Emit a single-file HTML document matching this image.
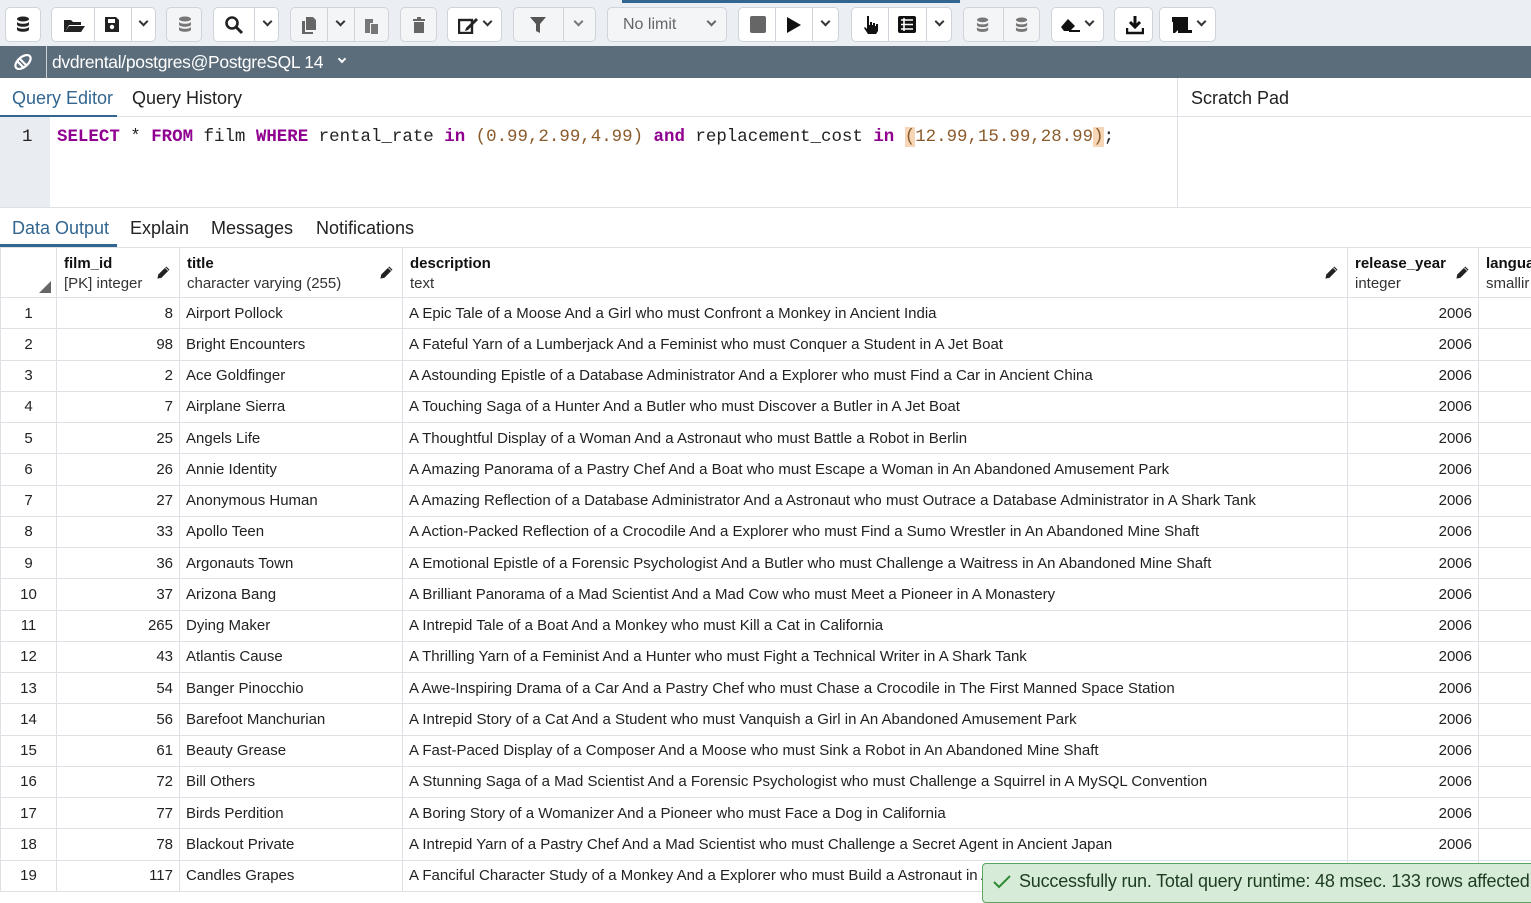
<!DOCTYPE html>
<html><head><meta charset="utf-8"><style>
*{box-sizing:border-box;margin:0;padding:0}
body{width:1531px;height:888px;overflow:hidden;background:#fff;font-family:"Liberation Sans",Arial,sans-serif;color:#222;position:relative}
.abs{position:absolute}
#tb{left:0;top:0;width:1531px;height:46px;background:#ebeef3}
.btn{position:absolute;top:7px;height:35px;border:1px solid #cfd4da;border-radius:5px;background:#fff}
.dv{position:absolute;top:0;bottom:0;width:1px;background:#cfd4da}
.ic{position:absolute;top:8px;font-size:17px;color:#222;line-height:18px}
.chev{position:absolute;top:10px;width:7px;height:7px;border-right:2px solid #333;border-bottom:2px solid #333;transform:rotate(45deg)}
#conn{left:0;top:46px;width:1531px;height:32px;background:#5b6c7b;color:#fff;font-size:17.5px}
.tab{position:absolute;font-size:18px;color:#222}
.code{font-family:"Liberation Mono",monospace;font-size:17.45px;white-space:pre;color:#222}
.kw{color:#900090;font-weight:bold}
.num{color:#8a5a2a}
table{border-collapse:collapse;position:absolute;left:0;top:247px;table-layout:fixed;width:1538px;font-size:15px}
td{border:1px solid #dde0e5;height:31.25px;padding:0 6px;white-space:nowrap;overflow:hidden;color:#222}
th{border:1px solid #dde0e5;height:50px;text-align:left;font-weight:normal;padding:0 7px;vertical-align:top;position:relative}
th b{display:block;margin-top:7px;font-size:15px;color:#111}
th span{display:block;font-size:15px;color:#333;margin-top:3px}
.pen{position:absolute;right:8px;top:17px}
td.r{text-align:right}
td.c{text-align:center;padding:0}
</style></head><body>
<svg width="0" height="0" style="position:absolute"><defs>
<symbol id="db" viewBox="0 0 16 18"><ellipse cx="7" cy="3" rx="6" ry="2.5"/><path d="M1 5.5c0 3 12 3 12 0v3c0 3-12 3-12 0z M1 10.5c0 3 12 3 12 0v3c0 3-12 3-12 0z"/></symbol>
<symbol id="pen" viewBox="0 0 16 16"><path d="M11 1l4 4-9 9-5 1 1-5z M10 3l3 3" fill="#222" stroke="#fff" stroke-width="0.8"/></symbol>
</defs></svg>
<div id="tb" class="abs"></div>
<div class="abs" style="left:622px;top:0;width:338px;height:3px;background:#326690"></div>
<div class="btn" style="left:5px;width:36px"><svg class="abs" style="left:10px;top:8px" width="16" height="18" fill="#222"><use href="#db"/></svg></div>
<div class="btn" style="left:51px;width:105px"><div class="dv" style="left:42px"></div><div class="dv" style="left:79px"></div>
<svg class="abs" style="left:11px;top:9px" width="22" height="16"><path d="M1 3h7l2 2h8v3H6L2 15H1z M6 9h16l-4 6H2z" fill="#222"/></svg>
<svg class="abs" style="left:52px;top:8px" width="16" height="17"><path d="M1 1h11l3 3v12H1z" fill="#222"/><rect x="4" y="3" width="7" height="4" fill="#fff"/><circle cx="8" cy="11" r="2.2" fill="#fff"/></svg>
<div class="chev" style="left:88px"></div></div>
<div class="btn" style="left:166px;width:36px;background:#f4f5f7"><svg class="abs" style="left:11px;top:8px" width="16" height="18" fill="#777"><use href="#db"/></svg></div>
<div class="btn" style="left:213px;width:66px"><div class="dv" style="left:40px"></div>
<svg class="abs" style="left:10px;top:7px" width="20" height="20"><circle cx="8" cy="8" r="5.5" stroke="#222" stroke-width="2.6" fill="none"/><path d="M12 12l6 6" stroke="#222" stroke-width="3"/></svg>
<div class="chev" style="left:50px"></div></div>
<div class="btn" style="left:290px;width:99px;background:#f4f5f7"><div class="dv" style="left:36px"></div><div class="dv" style="left:63px"></div>
<svg class="abs" style="left:10px;top:8px" width="16" height="18"><path d="M5 1h7l3 3v10H5z M1 5h3v11h8v2H1z" fill="#666"/></svg>
<div class="chev" style="left:46px"></div>
<svg class="abs" style="left:72px;top:8px" width="16" height="18"><path d="M2 3h8v4H7v10H2z M8 8h7v10H8z" fill="#777"/></svg></div>
<div class="btn" style="left:400px;width:37px;background:#f4f5f7"><svg class="abs" style="left:11px;top:8px" width="14" height="18"><path d="M1 3h12v2H1z M5 1h4v2H5z M2 6h10v11H2z" fill="#666"/></svg></div>
<div class="btn" style="left:447px;width:55px"><svg class="abs" style="left:10px;top:8px" width="22" height="18"><rect x="1" y="4" width="13" height="13" fill="none" stroke="#222" stroke-width="2.4"/><path d="M8 12l10-10 2 2-10 10-3 1z" fill="#222"/></svg><div class="chev" style="left:36px"></div></div>
<div class="btn" style="left:513px;width:83px;background:#f4f5f7"><div class="dv" style="left:49px"></div>
<svg class="abs" style="left:15px;top:8px" width="18" height="18"><path d="M1 1h16l-6 7v9l-4-2V8z" fill="#555"/></svg><div class="chev" style="left:61px;border-color:#777"></div></div>
<div class="btn" style="left:607px;width:120px;background:#f4f5f7"><span class="abs" style="left:15px;top:8px;font-size:16px;color:#666">No limit</span><div class="chev" style="left:100px;border-color:#666"></div></div>
<div class="btn" style="left:738px;width:101px"><div class="dv" style="left:36px"></div><div class="dv" style="left:73px"></div>
<div class="abs" style="left:11px;top:8px;width:16px;height:17px;background:#666;border-radius:2px"></div>
<svg class="abs" style="left:47px;top:8px" width="16" height="18"><path d="M1 1l14 8-14 8z" fill="#111"/></svg>
<div class="chev" style="left:83px"></div></div>
<div class="btn" style="left:851px;width:101px"><div class="dv" style="left:36px"></div><div class="dv" style="left:74px"></div>
<svg class="abs" style="left:10px;top:7px" width="17" height="20"><path d="M5 1h2v9h1V7h2v3h1V8h2v3h1v-2h2v7l-2 3H6l-4-6 1-1 2 2z" fill="#111"/></svg>
<svg class="abs" style="left:46px;top:8px" width="18" height="17"><rect x="0" y="0" width="18" height="17" rx="2" fill="#111"/><path d="M3 4h12M3 8.5h12M3 13h12M6 2v13" stroke="#fff" stroke-width="1.6"/></svg>
<div class="chev" style="left:84px"></div></div>
<div class="btn" style="left:963px;width:77px;background:#f4f5f7"><div class="dv" style="left:39px"></div>
<svg class="abs" style="left:12px;top:9px" width="15" height="17" fill="#777"><use href="#db"/></svg><svg class="abs" style="left:51px;top:9px" width="15" height="17" fill="#777"><use href="#db"/></svg></div>
<div class="btn" style="left:1051px;width:53px"><svg class="abs" style="left:9px;top:10px" width="20" height="14"><path d="M7 1l7 7-5 5H3L0 9z" fill="#111"/><path d="M8 13h11" stroke="#111" stroke-width="2"/></svg><div class="chev" style="left:34px"></div></div>
<div class="btn" style="left:1114px;width:39px"><svg class="abs" style="left:11px;top:7px" width="18" height="20"><path d="M9 1v10M4 7l5 5 5-5" stroke="#111" stroke-width="3" fill="none"/><path d="M1 13v5h16v-5" stroke="#111" stroke-width="2.5" fill="none"/></svg></div>
<div class="btn" style="left:1159px;width:57px"><svg class="abs" style="left:10px;top:8px" width="24" height="18"><path d="M3 1h15v13H8l-3 3H3z M2 1h3v5H2z" fill="#111"/><path d="M8 17h14v-3H8z" fill="#111"/></svg><div class="chev" style="left:38px"></div></div>

<div id="conn" class="abs">
<svg class="abs" style="left:11px;top:6px" width="24" height="20"><g stroke="#fff" stroke-width="2.2" fill="none"><ellipse cx="12" cy="10" rx="9" ry="5" transform="rotate(-40 12 10)"/><path d="M8 6l8 8M6 9l6 6"/></g></svg>
<div class="abs" style="left:46px;top:0;width:1px;height:32px;background:#c9d0d6"></div>
<span class="abs" style="left:52px;top:6px;letter-spacing:-0.3px">dvdrental/postgres@PostgreSQL 14</span>
<div class="chev" style="left:339px;top:10px;width:6px;height:6px;border-color:#fff"></div>
</div>

<div class="tab" style="left:12px;top:88px;color:#326690">Query Editor</div>
<div class="tab" style="left:132px;top:88px">Query History</div>
<div class="abs" style="left:0;top:116px;width:1177px;height:1px;background:#dde0e5"></div>
<div class="abs" style="left:0;top:115px;width:117px;height:2px;background:#326690"></div>
<div class="abs" style="left:1177px;top:78px;width:1px;height:129px;background:#dde0e5"></div>
<div class="tab" style="left:1191px;top:88px">Scratch Pad</div>
<div class="abs" style="left:1177px;top:116px;width:354px;height:1px;background:#dde0e5"></div>

<div class="abs" style="left:0;top:117px;width:50px;height:90px;background:#e9ecf0"></div>
<div class="abs code" style="left:22px;top:127px">1</div>
<div class="abs code" style="left:57px;top:127px"><span class="kw">SELECT</span> * <span class="kw">FROM</span> film <span class="kw">WHERE</span> rental_rate <span class="kw">in</span> <span class="num">(0.99,2.99,4.99)</span> <span class="kw">and</span> replacement_cost <span class="kw">in</span> <span class="num"><span style="background:#f6d6b6">(</span>12.99,15.99,28.99<span style="background:#f6d6b6">)</span></span>;</div>
<div class="abs" style="left:0;top:207px;width:1531px;height:1px;background:#dde0e5"></div>

<div class="tab" style="left:12px;top:218px;color:#326690">Data Output</div>
<div class="tab" style="left:130px;top:218px">Explain</div>
<div class="tab" style="left:211px;top:218px">Messages</div>
<div class="tab" style="left:316px;top:218px">Notifications</div>
<div class="abs" style="left:0;top:244px;width:117px;height:3px;background:#326690"></div>

<table>
<colgroup><col style="width:56px"><col style="width:123px"><col style="width:223px"><col style="width:945px"><col style="width:131px"><col style="width:60px"></colgroup>
<tr><th><div class="abs" style="left:38px;top:33px;width:0;height:0;border-left:12px solid transparent;border-bottom:12px solid #666"></div></th>
<th><b>film_id</b><span>[PK] integer</span><svg class="pen" width="15" height="15"><use href="#pen"/></svg></th>
<th><b>title</b><span>character varying (255)</span><svg class="pen" width="15" height="15"><use href="#pen"/></svg></th>
<th><b>description</b><span>text</span><svg class="pen" width="15" height="15"><use href="#pen"/></svg></th>
<th><b>release_year</b><span>integer</span><svg class="pen" width="15" height="15"><use href="#pen"/></svg></th>
<th><b>langua</b><span>smallir</span></th></tr>
<tr><td class="c">1</td><td class="r">8</td><td>Airport Pollock</td><td>A Epic Tale of a Moose And a Girl who must Confront a Monkey in Ancient India</td><td class="r">2006</td><td></td></tr>
<tr><td class="c">2</td><td class="r">98</td><td>Bright Encounters</td><td>A Fateful Yarn of a Lumberjack And a Feminist who must Conquer a Student in A Jet Boat</td><td class="r">2006</td><td></td></tr>
<tr><td class="c">3</td><td class="r">2</td><td>Ace Goldfinger</td><td>A Astounding Epistle of a Database Administrator And a Explorer who must Find a Car in Ancient China</td><td class="r">2006</td><td></td></tr>
<tr><td class="c">4</td><td class="r">7</td><td>Airplane Sierra</td><td>A Touching Saga of a Hunter And a Butler who must Discover a Butler in A Jet Boat</td><td class="r">2006</td><td></td></tr>
<tr><td class="c">5</td><td class="r">25</td><td>Angels Life</td><td>A Thoughtful Display of a Woman And a Astronaut who must Battle a Robot in Berlin</td><td class="r">2006</td><td></td></tr>
<tr><td class="c">6</td><td class="r">26</td><td>Annie Identity</td><td>A Amazing Panorama of a Pastry Chef And a Boat who must Escape a Woman in An Abandoned Amusement Park</td><td class="r">2006</td><td></td></tr>
<tr><td class="c">7</td><td class="r">27</td><td>Anonymous Human</td><td>A Amazing Reflection of a Database Administrator And a Astronaut who must Outrace a Database Administrator in A Shark Tank</td><td class="r">2006</td><td></td></tr>
<tr><td class="c">8</td><td class="r">33</td><td>Apollo Teen</td><td>A Action-Packed Reflection of a Crocodile And a Explorer who must Find a Sumo Wrestler in An Abandoned Mine Shaft</td><td class="r">2006</td><td></td></tr>
<tr><td class="c">9</td><td class="r">36</td><td>Argonauts Town</td><td>A Emotional Epistle of a Forensic Psychologist And a Butler who must Challenge a Waitress in An Abandoned Mine Shaft</td><td class="r">2006</td><td></td></tr>
<tr><td class="c">10</td><td class="r">37</td><td>Arizona Bang</td><td>A Brilliant Panorama of a Mad Scientist And a Mad Cow who must Meet a Pioneer in A Monastery</td><td class="r">2006</td><td></td></tr>
<tr><td class="c">11</td><td class="r">265</td><td>Dying Maker</td><td>A Intrepid Tale of a Boat And a Monkey who must Kill a Cat in California</td><td class="r">2006</td><td></td></tr>
<tr><td class="c">12</td><td class="r">43</td><td>Atlantis Cause</td><td>A Thrilling Yarn of a Feminist And a Hunter who must Fight a Technical Writer in A Shark Tank</td><td class="r">2006</td><td></td></tr>
<tr><td class="c">13</td><td class="r">54</td><td>Banger Pinocchio</td><td>A Awe-Inspiring Drama of a Car And a Pastry Chef who must Chase a Crocodile in The First Manned Space Station</td><td class="r">2006</td><td></td></tr>
<tr><td class="c">14</td><td class="r">56</td><td>Barefoot Manchurian</td><td>A Intrepid Story of a Cat And a Student who must Vanquish a Girl in An Abandoned Amusement Park</td><td class="r">2006</td><td></td></tr>
<tr><td class="c">15</td><td class="r">61</td><td>Beauty Grease</td><td>A Fast-Paced Display of a Composer And a Moose who must Sink a Robot in An Abandoned Mine Shaft</td><td class="r">2006</td><td></td></tr>
<tr><td class="c">16</td><td class="r">72</td><td>Bill Others</td><td>A Stunning Saga of a Mad Scientist And a Forensic Psychologist who must Challenge a Squirrel in A MySQL Convention</td><td class="r">2006</td><td></td></tr>
<tr><td class="c">17</td><td class="r">77</td><td>Birds Perdition</td><td>A Boring Story of a Womanizer And a Pioneer who must Face a Dog in California</td><td class="r">2006</td><td></td></tr>
<tr><td class="c">18</td><td class="r">78</td><td>Blackout Private</td><td>A Intrepid Yarn of a Pastry Chef And a Mad Scientist who must Challenge a Secret Agent in Ancient Japan</td><td class="r">2006</td><td></td></tr>
<tr><td class="c">19</td><td class="r">117</td><td>Candles Grapes</td><td>A Fanciful Character Study of a Monkey And a Explorer who must Build a Astronaut in An Abandoned Amusement Park</td><td class="r">2006</td><td></td></tr>
</table>

<div class="abs" style="left:982px;top:863px;width:560px;height:40px;background:#d6ebd8;border:1px solid #5aa55f;border-radius:4px">
<svg class="abs" style="left:10px;top:11px" width="18" height="14"><path d="M1 7l5 5L17 1" stroke="#2f8a34" stroke-width="2" fill="none"/></svg>
<span class="abs" style="left:36px;top:7px;font-size:18px;color:#1d3d21;white-space:nowrap;letter-spacing:-0.2px">Successfully run. Total query runtime: 48 msec. 133 rows affected.</span>
</div>
</body></html>
